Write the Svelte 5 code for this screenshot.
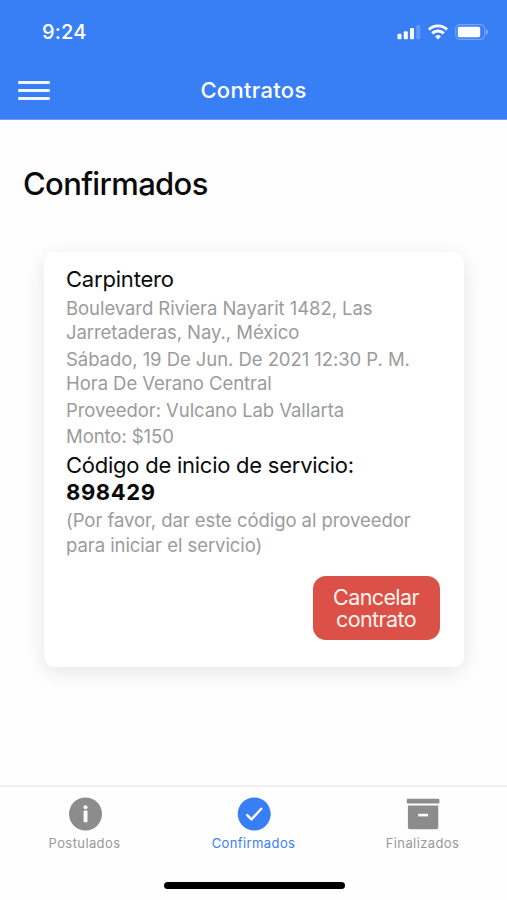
<script lang="ts">
    const contract = {
        service: "Carpintero",
        code: "898429",
        details: [
            "Boulevard Riviera Nayarit 1482, Las Jarretaderas, Nay., México",
            "Sábado, 19 De Jun. De 2021 12:30 P. M. Hora De Verano Central",
            "Proveedor: Vulcano Lab Vallarta",
            "Monto: $150"
        ]
    };

    const tabs = [
        { id: "info", label: "Postulados" },
        { id: "check", label: "Confirmados" },
        { id: "archive", label: "Finalizados" }
    ];

    let active = $state("check");
</script>

<div class="screen">
    <header>
        <div class="status">
            <span class="time">9:24</span>
            <div class="indicators">
                <svg width="24" height="16" viewBox="0 0 24 16" fill="#fff">
                    <rect x="0.5" y="9.8" width="4" height="5.5" rx="1" />
                    <rect x="6.8" y="7.2" width="4" height="8.1" rx="1" />
                    <rect x="13" y="4" width="4" height="11.3" rx="1" />
                    <rect x="19.2" y="1" width="4" height="14.3" rx="1" opacity="0.2" />
                </svg>
                <svg class="wifi" width="20" height="16" viewBox="0 0 20 16" fill="none" stroke="#fff" stroke-width="2.9">
                    <path d="M1 5.6a12.8 12.8 0 0 1 18 0" />
                    <path d="M4.2 9.4a8.3 8.3 0 0 1 11.6 0" />
                    <path d="M10 15.5l-2.9-3a4.2 4.2 0 0 1 5.8 0z" fill="#fff" stroke="none" />
                </svg>
                <svg class="battery" width="34" height="16" viewBox="0 0 34 16">
                    <rect x="0.7" y="0.7" width="29" height="14.6" rx="4.2" fill="none" stroke="#fff" stroke-width="1.2" opacity="0.3" />
                    <rect x="2.8" y="2.8" width="22.4" height="10.4" rx="1.8" fill="#fff" />
                    <path d="M31 5.3c2.6 0.8 2.6 4.6 0 5.4z" fill="#fff" opacity="0.4" />
                </svg>
            </div>
        </div>
        <div class="toolbar">
            <button class="menu" aria-label="Menú">
                <span></span>
                <span></span>
                <span></span>
            </button>
            <div class="title">Contratos</div>
        </div>
    </header>

    <main>
        <h1>Confirmados</h1>
        <div class="card">
            <h2>{contract.service}</h2>
            {#each contract.details as detail}
                <p>{detail}</p>
            {/each}
            <h2 class="code">Código de inicio de servicio: <strong>{contract.code}</strong></h2>
            <p class="note">(Por favor, dar este código al proveedor para iniciar el servicio)</p>
            <button class="cancel">Cancelar contrato</button>
        </div>
    </main>

    <nav>
        {#each tabs as tab}
            <button class="tab" class:active={active === tab.id} onclick={() => (active = tab.id)}>
                <svg width="34" height="34" viewBox="0 0 34 34">
                    {#if tab.id === "info"}
                        <circle cx="17.5" cy="17" r="16.5" fill="currentColor" />
                        <circle cx="17.5" cy="10.2" r="2" fill="#fff" />
                        <rect x="15.6" y="13.4" width="3.9" height="11.8" rx="0.8" fill="#fff" />
                    {:else if tab.id === "check"}
                        <circle cx="17.2" cy="17" r="16.5" fill="currentColor" />
                        <path d="M10.2 18.1l4.3 4.3L24.3 11.8" fill="none" stroke="#fff" stroke-width="2.4" stroke-linecap="round" stroke-linejoin="round" />
                    {:else}
                        <rect x="0.8" y="1.8" width="32.6" height="4.6" rx="1.2" fill="currentColor" />
                        <path d="M1.9 8.4h30.4v21.8a2 2 0 0 1-2 2H3.9a2 2 0 0 1-2-2z" fill="currentColor" />
                        <rect x="12.2" y="16.8" width="9.8" height="2.6" fill="#fff" />
                    {/if}
                </svg>
                <span>{tab.label}</span>
            </button>
        {/each}
    </nav>
    <div class="home"><div class="bar"></div></div>
</div>

<style>
    :global(body) {
        margin: 0;
        background: #fefefe;
    }

    .screen {
        height: 900px;
        box-sizing: border-box;
        overflow: hidden;
        display: flex;
        flex-direction: column;
        font-family: Inter, "Liberation Sans", sans-serif;
        color: #0a0a0a;
        background: #fefefe;
    }

    button {
        font-family: inherit;
        border: 0;
        padding: 0;
        background: none;
    }

    header {
        height: 119px;
        background: #387ff6;
        border-bottom: 1px solid #6b9ff0;
        color: #fff;
    }

    .status {
        height: 64px;
        padding: 0 18px 0 42px;
        display: flex;
        justify-content: space-between;
        align-items: center;
    }

    .time {
        font-size: 20px;
        font-weight: 500;
        letter-spacing: 0.2px;
    }

    .indicators {
        display: flex;
        align-items: center;
    }

    .wifi {
        margin-left: 7px;
    }

    .battery {
        margin-left: 7px;
    }

    .toolbar {
        height: 53px;
        padding: 0 18px;
        display: grid;
        grid-template-columns: 32px 1fr 32px;
        align-items: center;
    }

    .menu {
        display: flex;
        flex-direction: column;
        gap: 5.4px;
    }

    .menu span {
        height: 2.5px;
        border-radius: 1px;
        background: #f0f6ff;
    }

    .title {
        padding-bottom: 2px;
        text-align: center;
        font-size: 22px;
        font-weight: 500;
        letter-spacing: 0.3px;
    }

    main {
        flex: 1;
        padding: 44px 43px 0 44px;
    }

    h1 {
        margin: 0 0 48px -21px;
        font-size: 31px;
        line-height: 40px;
        font-weight: 500;
        letter-spacing: -0.65px;
    }

    .card {
        height: 415px;
        box-sizing: border-box;
        padding: 14px 24px 27px 22px;
        display: flex;
        flex-direction: column;
        border-radius: 10px;
        background: #fff;
        box-shadow: 0 5px 20px rgba(0, 0, 0, 0.1);
    }

    h2 {
        margin: 0;
        font-size: 22px;
        line-height: 27px;
        font-weight: 400;
        letter-spacing: -0.2px;
    }

    h2.code {
        margin-top: 3px;
        letter-spacing: -0.25px;
    }

    strong {
        display: block;
        font-weight: 700;
        letter-spacing: 0.6px;
    }

    p {
        margin: 2.5px 0 0;
        font-size: 18.5px;
        line-height: 24.3px;
        letter-spacing: -0.06px;
        color: #9b9b9b;
    }

    .cancel {
        width: 127px;
        height: 64px;
        margin-top: auto;
        margin-right: 0.5px;
        align-self: flex-end;
        padding: 0 18px;
        border-radius: 13px;
        background: #db5148;
        color: #fff3ee;
        font-size: 21.5px;
        line-height: 22px;
        letter-spacing: -0.6px;
    }

    nav {
        height: 83px;
        padding-top: 10px;
        box-sizing: border-box;
        display: grid;
        grid-template-columns: repeat(3, 1fr);
        border-top: 2px solid #f0f0f0;
    }

    .tab {
        display: flex;
        flex-direction: column;
        align-items: center;
        justify-content: flex-start;
        color: #8c8c8c;
    }

    .tab span {
        margin-top: 3px;
        font-size: 13px;
        line-height: 18px;
        letter-spacing: 0.4px;
        color: #999;
    }

    .tab.active,
    .tab.active span {
        color: #387ff6;
    }

    .home {
        height: 32px;
        display: flex;
        justify-content: center;
    }

    .bar {
        width: 181px;
        height: 7px;
        margin-top: 14px;
        margin-left: 1px;
        border-radius: 4px;
        background: #000;
    }
</style>
